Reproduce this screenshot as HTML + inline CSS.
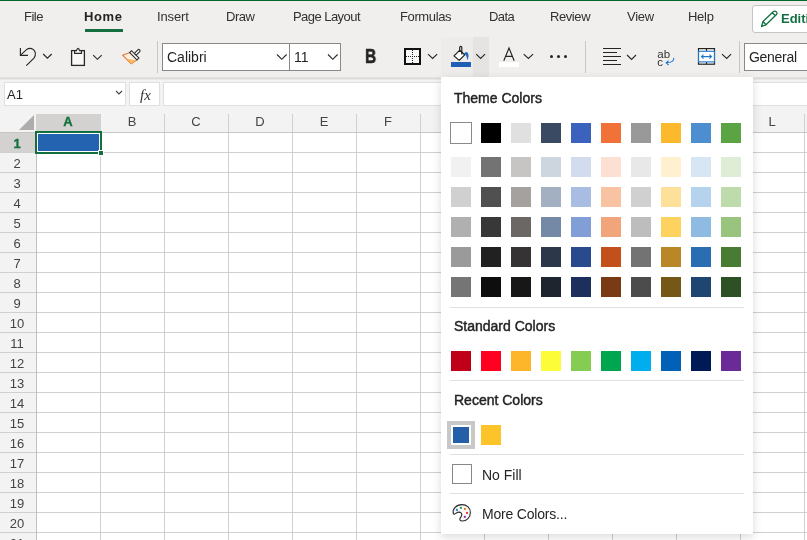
<!DOCTYPE html>
<html><head><meta charset="utf-8">
<style>
*{box-sizing:border-box}
html,body{margin:0;padding:0;width:807px;height:540px;overflow:hidden;background:#fff;font-family:"Liberation Sans",sans-serif;color:#252423}
.a{position:absolute}
.tab,.ptitle,.rh,.ch,.a{will-change:transform}
.tab{position:absolute;top:9px;font-size:13px;color:#323130;white-space:nowrap;line-height:15px}
.sep{position:absolute;width:1px;background:#c8c6c4}
.chev{position:absolute}
.rh{position:absolute;left:0;width:34px;height:20px;text-align:center;font-size:13px;color:#444;line-height:20px}
.ch{position:absolute;top:112px;height:19px;width:64px;text-align:center;font-size:13px;color:#444;line-height:19px}
.sw{position:absolute;width:20px;height:20px}
.ptitle{position:absolute;left:454px;font-size:14px;font-weight:normal;color:#252423;white-space:nowrap;letter-spacing:0px;-webkit-text-stroke:0.45px #252423}
.hr{position:absolute;left:450px;width:294px;height:1px;background:#e1dfdd}
</style></head><body>
<!-- top tab bar + ribbon background -->
<div class="a" style="left:0;top:0;width:807px;height:77px;background:#f0efee"></div>
<div class="a" style="left:0;top:0;width:807px;height:1px;background:#00672b"></div>

<!-- tabs -->
<div class="tab" style="left:24px;letter-spacing:-0.5px">File</div>
<div class="tab" style="left:84px;font-weight:bold;color:#252423;letter-spacing:0.6px">Home</div>
<div class="a" style="left:85px;top:29px;width:38px;height:3px;background:#13703e"></div>
<div class="tab" style="left:157px;letter-spacing:-0.14px">Insert</div>
<div class="tab" style="left:226px;letter-spacing:-0.5px">Draw</div>
<div class="tab" style="left:293px;letter-spacing:-0.55px">Page Layout</div>
<div class="tab" style="left:400px;letter-spacing:-0.38px">Formulas</div>
<div class="tab" style="left:489px;letter-spacing:-0.6px">Data</div>
<div class="tab" style="left:550px;letter-spacing:-0.42px">Review</div>
<div class="tab" style="left:627px;letter-spacing:-0.23px">View</div>
<div class="tab" style="left:688px;letter-spacing:-0.27px">Help</div>

<!-- Editing button -->
<div class="a" style="left:752px;top:5px;width:70px;height:28px;background:#fff;border:1px solid #c4c4c4;border-radius:3px"></div>
<svg class="a" style="left:758px;top:10px" width="22" height="20" viewBox="0 0 22 20">
<path d="M3.5 16.5 L5 11.5 L15.5 1.5 Q17 0.5 18.5 2 Q19.5 3.5 18.5 4.5 L8 14.8 Z M5 11.5 L8 14.8 M14.3 2.7 L17.4 5.8" fill="none" stroke="#137040" stroke-width="1.3" stroke-linejoin="round"/>
</svg>
<div class="a" style="left:781px;top:11px;font-size:13px;font-weight:bold;color:#137040;white-space:nowrap">Editing</div>

<!-- fill button bg -->
<div class="a" style="left:441px;top:37px;width:32px;height:40px;background:#edeceb"></div>
<div class="a" style="left:473px;top:37px;width:16px;height:40px;background:#e5e4e3"></div>
<!-- ribbon icons -->
<svg class="a" style="left:0;top:36px" width="807" height="41" viewBox="0 36 807 41">
 <g fill="none" stroke="#292827" stroke-width="1.15">
  <!-- undo -->
  <path d="M20.4 48 V55.4 H28"/>
  <path d="M20.6 55.2 L26.5 49.6 Q29.8 47 33.5 49.6 Q37 53 34.2 57.8 L26.3 65.7"/>
  <path d="M43.2 54 L47.4 58.2 L51.7 54"/>
  <!-- clipboard -->
  <rect x="71.6" y="50.6" width="12.8" height="14.8" fill="#f8f8f8" stroke-width="1.3"/>
  <path d="M74.6 53.3 V50.6 H76.5 Q77.2 48.3 78.1 48.3 Q79 48.3 79.6 50.6 H81.5 V53.3 Z" fill="#f8f8f8" stroke-width="1.2"/>
  <path d="M93.2 55.1 L97.4 59.3 L101.7 55.1"/>
 </g>
 <!-- format painter -->
 <g transform="translate(135.2 54.4) rotate(45)">
  <path d="M-5 2.4 L5 2.4 L3.9 9.4 L-8.4 9.5 Z" fill="#fdf1e6" stroke="#e8762c" stroke-width="1.1" stroke-linejoin="round"/>
  <path d="M-2.6 8.8 L4.6 3.6 L3.9 9.4 Z" fill="#f8bd5e"/>
  <rect x="-5.2" y="0" width="10.4" height="2.6" fill="#fff" stroke="#2d2c2b" stroke-width="1.1"/>
  <rect x="-1.3" y="-6.3" width="2.6" height="6.3" rx="1.2" fill="#fff" stroke="#2d2c2b" stroke-width="1.1"/>
 </g>
 <g fill="none" stroke="#292827" stroke-width="1.15">
  <path d="M428 54.1 L432.6 58.5 L437.2 54.1"/>
  <path d="M476.2 54.1 L480.6 58.5 L485.1 54.1"/>
  <path d="M523.7 54.1 L528.4 58.5 L533.1 54.1"/>
  <path d="M627 55 L631.6 59.4 L636 55"/>
  <path d="M722 54.1 L726.7 58.5 L731.1 54.1"/>
 </g>
</svg>


<svg class="a" style="left:0;top:36px" width="807" height="41" viewBox="0 36 807 41">
 <!-- borders icon -->
 <rect x="405" y="49" width="15" height="15" fill="#f8f8f8" stroke="#111" stroke-width="2"/>
 <g fill="#222"><rect x="412" y="50" width="1" height="1"/><rect x="412" y="52" width="1" height="1"/><rect x="412" y="54" width="1" height="1"/><rect x="412" y="58" width="1" height="1"/><rect x="412" y="60" width="1" height="1"/><rect x="412" y="62" width="1" height="1"/><rect x="406" y="56" width="1" height="1"/><rect x="408" y="56" width="1" height="1"/><rect x="410" y="56" width="1" height="1"/><rect x="414" y="56" width="1" height="1"/><rect x="416" y="56" width="1" height="1"/><rect x="418" y="56" width="1" height="1"/><rect x="412" y="56" width="1" height="1"/></g>
 <!-- fill icon -->
 <path d="M454 55.9 L459.6 50.3 L464.7 54.8 L459.2 60.4 Z" fill="#fff" stroke="#1e1e1e" stroke-width="1.2" stroke-linejoin="round"/>
 <path d="M459.7 51 V47.6 Q459.7 46.4 460.75 46.4 Q461.8 46.4 461.8 47.6 V54.4" fill="none" stroke="#1e1e1e" stroke-width="1.15"/>
 <path d="M464 53.7 Q465.3 51.4 467 52.2 Q469 53.4 468.4 57 L467.5 60.6 Q466.8 57.2 466.1 55.6 Q465.3 54.2 464 53.7 Z" fill="#1f66bf"/>
 <rect x="451" y="62" width="20" height="5" fill="#1f5fb5"/>
 <!-- font color A -->
 <rect x="499" y="62" width="20" height="5" fill="#ffffff"/>
 <path d="M503.8 60.8 L509 48 L514.2 60.8 M505.6 56.3 H512.4" fill="none" stroke="#252423" stroke-width="1.15"/>
 <!-- dots -->
 <circle cx="551.5" cy="56.6" r="1.5" fill="#252423"/><circle cx="558.5" cy="56.6" r="1.5" fill="#252423"/><circle cx="565.5" cy="56.6" r="1.5" fill="#252423"/>
 <!-- align -->
 <g stroke="#252423" stroke-width="1.1">
  <path d="M603 48.5 H621 M603 52.5 H617 M603 56.5 H621 M603 60.5 H617 M603 64.5 H621"/>
 </g>
 <!-- wrap text -->
 <text x="657.3" y="57.6" font-size="11.5" fill="#333" font-family="Liberation Sans">ab</text>
 <text x="657.3" y="65.6" font-size="11.5" fill="#333" font-family="Liberation Sans">c</text>
 <path d="M673.7 57.8 Q674.5 62.5 666.5 62.8 M668.6 60.6 L666.2 62.8 L668.6 65" fill="none" stroke="#1f77c9" stroke-width="1.1"/>
 <!-- merge -->
 <g fill="#fafafa" stroke="#252423" stroke-width="1.2">
  <rect x="698.5" y="48.6" width="16" height="15.6"/>
  <path d="M706.5 48.6 V51 M706.5 62 V64.2"/>
 </g>
 <rect x="698.6" y="51.3" width="15.8" height="10.6" fill="#fff" stroke="#1f77c9" stroke-width="1.1"/>
 <path d="M701.5 56.6 H711.5 M703.5 54.6 L701.5 56.6 L703.5 58.6 M709.5 54.6 L711.5 56.6 L709.5 58.6" fill="none" stroke="#1f77c9" stroke-width="1.1"/>
</svg>

<!-- separators -->
<div class="sep" style="left:157px;top:41px;height:32px"></div>
<div class="sep" style="left:585px;top:41px;height:32px"></div>
<div class="sep" style="left:739px;top:41px;height:32px"></div>

<!-- font boxes -->
<div class="a" style="left:162px;top:43px;width:128px;height:28px;background:#fff;border:1px solid #8a8886"></div>
<div class="a" style="left:289px;top:43px;width:52px;height:28px;background:#fff;border:1px solid #8a8886"></div>
<div class="a" style="left:167px;top:49px;font-size:14px;color:#252423">Calibri</div>
<div class="a" style="left:294px;top:49px;font-size:14px;color:#252423">11</div>
<svg class="a" style="left:275px;top:51px" width="14" height="12"><path d="M2 3.5 L6.8 8.3 L11.6 3.5" fill="none" stroke="#292827" stroke-width="1.15"/></svg>
<svg class="a" style="left:326px;top:51px" width="14" height="12"><path d="M2 3.5 L6.8 8.3 L11.6 3.5" fill="none" stroke="#292827" stroke-width="1.15"/></svg>

<!-- Bold -->
<div class="a" style="left:365px;top:46px;font-size:19.5px;font-weight:bold;color:#252423;line-height:20px;transform:scaleX(0.8);transform-origin:0 0;-webkit-text-stroke:0.6px #252423">B</div>

<!-- General box -->
<div class="a" style="left:744px;top:43px;width:80px;height:28px;background:#fff;border:1px solid #8a8886"></div>
<div class="a" style="left:749px;top:49px;font-size:14px;color:#252423;letter-spacing:-0.3px">General</div>

<!-- formula bar area -->
<div class="a" style="left:0;top:77px;width:807px;height:36px;background:#f3f3f3"></div>
<div class="a" style="left:0;top:77px;width:807px;height:3px;background:linear-gradient(#e7e6e5,#dadada 50%,#efefef)"></div>
<div class="a" style="left:4px;top:82px;width:122px;height:24px;background:#fff;border:1px solid #e1dfdd"></div>
<div class="a" style="left:7px;top:87px;font-size:13px;color:#252423">A1</div>
<svg class="a" style="left:114px;top:88px" width="10" height="10"><path d="M2 3 L5 6 L8 3" fill="none" stroke="#444" stroke-width="1.1"/></svg>
<div class="a" style="left:129px;top:82px;width:31px;height:24px;background:#fff;border:1px solid #e1dfdd"></div>
<div class="a" style="left:140px;top:87px;font-size:15px;font-style:italic;font-family:'Liberation Serif',serif;color:#333">fx</div>
<div class="a" style="left:163px;top:82px;width:660px;height:24px;background:#fff;border:1px solid #e1dfdd"></div>

<!-- grid -->
<div class="a" style="left:0;top:113px;width:807px;height:427px;background:#fff"></div>
<div class="a" style="left:0;top:113px;width:807px;height:19px;background:#f3f3f3"></div>
<div class="a" style="left:0;top:113px;width:36px;height:427px;background:#f3f3f3"></div>
<div class="a" style="left:36px;top:114px;width:1px;height:426px;background:#d0d0d0"></div>
<div class="a" style="left:100px;top:114px;width:1px;height:426px;background:#d0d0d0"></div>
<div class="a" style="left:164px;top:114px;width:1px;height:426px;background:#d0d0d0"></div>
<div class="a" style="left:228px;top:114px;width:1px;height:426px;background:#d0d0d0"></div>
<div class="a" style="left:292px;top:114px;width:1px;height:426px;background:#d0d0d0"></div>
<div class="a" style="left:356px;top:114px;width:1px;height:426px;background:#d0d0d0"></div>
<div class="a" style="left:420px;top:114px;width:1px;height:426px;background:#d0d0d0"></div>
<div class="a" style="left:484px;top:114px;width:1px;height:426px;background:#d0d0d0"></div>
<div class="a" style="left:548px;top:114px;width:1px;height:426px;background:#d0d0d0"></div>
<div class="a" style="left:612px;top:114px;width:1px;height:426px;background:#d0d0d0"></div>
<div class="a" style="left:676px;top:114px;width:1px;height:426px;background:#d0d0d0"></div>
<div class="a" style="left:740px;top:114px;width:1px;height:426px;background:#d0d0d0"></div>
<div class="a" style="left:804px;top:114px;width:1px;height:426px;background:#d0d0d0"></div>
<div class="a" style="left:36px;top:152px;width:771px;height:1px;background:#d0d0d0"></div>
<div class="a" style="left:36px;top:172px;width:771px;height:1px;background:#d0d0d0"></div>
<div class="a" style="left:36px;top:192px;width:771px;height:1px;background:#d0d0d0"></div>
<div class="a" style="left:36px;top:212px;width:771px;height:1px;background:#d0d0d0"></div>
<div class="a" style="left:36px;top:232px;width:771px;height:1px;background:#d0d0d0"></div>
<div class="a" style="left:36px;top:252px;width:771px;height:1px;background:#d0d0d0"></div>
<div class="a" style="left:36px;top:272px;width:771px;height:1px;background:#d0d0d0"></div>
<div class="a" style="left:36px;top:292px;width:771px;height:1px;background:#d0d0d0"></div>
<div class="a" style="left:36px;top:312px;width:771px;height:1px;background:#d0d0d0"></div>
<div class="a" style="left:36px;top:332px;width:771px;height:1px;background:#d0d0d0"></div>
<div class="a" style="left:36px;top:352px;width:771px;height:1px;background:#d0d0d0"></div>
<div class="a" style="left:36px;top:372px;width:771px;height:1px;background:#d0d0d0"></div>
<div class="a" style="left:36px;top:392px;width:771px;height:1px;background:#d0d0d0"></div>
<div class="a" style="left:36px;top:412px;width:771px;height:1px;background:#d0d0d0"></div>
<div class="a" style="left:36px;top:432px;width:771px;height:1px;background:#d0d0d0"></div>
<div class="a" style="left:36px;top:452px;width:771px;height:1px;background:#d0d0d0"></div>
<div class="a" style="left:36px;top:472px;width:771px;height:1px;background:#d0d0d0"></div>
<div class="a" style="left:36px;top:492px;width:771px;height:1px;background:#d0d0d0"></div>
<div class="a" style="left:36px;top:512px;width:771px;height:1px;background:#d0d0d0"></div>
<div class="a" style="left:36px;top:532px;width:771px;height:1px;background:#d0d0d0"></div>
<div class="a" style="left:0;top:132px;width:807px;height:1px;background:#c8c6c4"></div>
<div class="a" style="left:36px;top:132px;width:1px;height:408px;background:#c0c0c0"></div>
<div class="a" style="left:36px;top:114px;width:64px;height:18px;background:#d4d2d0"></div>
<div class="a" style="left:0;top:133px;width:36px;height:19px;background:#d4d2d0"></div>
<div class="a" style="left:0;top:152px;width:36px;height:1px;background:#d0d0d0"></div>
<div class="a" style="left:0;top:172px;width:36px;height:1px;background:#d0d0d0"></div>
<div class="a" style="left:0;top:192px;width:36px;height:1px;background:#d0d0d0"></div>
<div class="a" style="left:0;top:212px;width:36px;height:1px;background:#d0d0d0"></div>
<div class="a" style="left:0;top:232px;width:36px;height:1px;background:#d0d0d0"></div>
<div class="a" style="left:0;top:252px;width:36px;height:1px;background:#d0d0d0"></div>
<div class="a" style="left:0;top:272px;width:36px;height:1px;background:#d0d0d0"></div>
<div class="a" style="left:0;top:292px;width:36px;height:1px;background:#d0d0d0"></div>
<div class="a" style="left:0;top:312px;width:36px;height:1px;background:#d0d0d0"></div>
<div class="a" style="left:0;top:332px;width:36px;height:1px;background:#d0d0d0"></div>
<div class="a" style="left:0;top:352px;width:36px;height:1px;background:#d0d0d0"></div>
<div class="a" style="left:0;top:372px;width:36px;height:1px;background:#d0d0d0"></div>
<div class="a" style="left:0;top:392px;width:36px;height:1px;background:#d0d0d0"></div>
<div class="a" style="left:0;top:412px;width:36px;height:1px;background:#d0d0d0"></div>
<div class="a" style="left:0;top:432px;width:36px;height:1px;background:#d0d0d0"></div>
<div class="a" style="left:0;top:452px;width:36px;height:1px;background:#d0d0d0"></div>
<div class="a" style="left:0;top:472px;width:36px;height:1px;background:#d0d0d0"></div>
<div class="a" style="left:0;top:492px;width:36px;height:1px;background:#d0d0d0"></div>
<div class="a" style="left:0;top:512px;width:36px;height:1px;background:#d0d0d0"></div>
<div class="a" style="left:0;top:532px;width:36px;height:1px;background:#d0d0d0"></div>
<div class="a" style="left:0;top:552px;width:36px;height:1px;background:#d0d0d0"></div>
<div class="rh" style="top:134px;color:#13703e;font-weight:bold;-webkit-text-stroke:0.35px #13703e">1</div>
<div class="rh" style="top:154px;">2</div>
<div class="rh" style="top:174px;">3</div>
<div class="rh" style="top:194px;">4</div>
<div class="rh" style="top:214px;">5</div>
<div class="rh" style="top:234px;">6</div>
<div class="rh" style="top:254px;">7</div>
<div class="rh" style="top:274px;">8</div>
<div class="rh" style="top:294px;">9</div>
<div class="rh" style="top:314px;">10</div>
<div class="rh" style="top:334px;">11</div>
<div class="rh" style="top:354px;">12</div>
<div class="rh" style="top:374px;">13</div>
<div class="rh" style="top:394px;">14</div>
<div class="rh" style="top:414px;">15</div>
<div class="rh" style="top:434px;">16</div>
<div class="rh" style="top:454px;">17</div>
<div class="rh" style="top:474px;">18</div>
<div class="rh" style="top:494px;">19</div>
<div class="rh" style="top:514px;">20</div>
<div class="rh" style="top:534px;">21</div>
<div class="ch" style="left:36px;color:#13703e;font-weight:bold;-webkit-text-stroke:0.35px #13703e">A</div>
<div class="ch" style="left:100px;">B</div>
<div class="ch" style="left:164px;">C</div>
<div class="ch" style="left:228px;">D</div>
<div class="ch" style="left:292px;">E</div>
<div class="ch" style="left:356px;">F</div>
<div class="ch" style="left:420px;">G</div>
<div class="ch" style="left:484px;">H</div>
<div class="ch" style="left:548px;">I</div>
<div class="ch" style="left:612px;">J</div>
<div class="ch" style="left:676px;">K</div>
<div class="ch" style="left:740px;">L</div>
<svg class="a" style="left:18px;top:114px" width="17" height="17"><path d="M16 1 V16 H1 Z" fill="#adadad"/></svg>
<div class="a" style="left:35px;top:131px;width:67px;height:23px;border:2px solid #13703e;background:#fff"></div>
<div class="a" style="left:38px;top:134px;width:61px;height:17px;background:#2463b0"></div>
<div class="a" style="left:98px;top:150px;width:6px;height:6px;background:#fff"></div>
<div class="a" style="left:99px;top:151px;width:4px;height:4px;background:#13703e"></div>
<div class="a" style="left:441px;top:77px;width:312px;height:457px;background:#fff;box-shadow:0 3px 9px rgba(0,0,0,0.15)"></div>
<div class="ptitle" style="top:90px">Theme Colors</div>
<div class="a" style="left:450px;top:122px;width:22px;height:22px;border:1px solid #8a8a8a;background:#fff"></div>
<div class="sw" style="left:481px;top:123px;background:#000000"></div>
<div class="sw" style="left:511px;top:123px;background:#e0e0e0"></div>
<div class="sw" style="left:541px;top:123px;background:#3a4a62"></div>
<div class="sw" style="left:571px;top:123px;background:#3b63bd"></div>
<div class="sw" style="left:601px;top:123px;background:#f07238"></div>
<div class="sw" style="left:631px;top:123px;background:#999999"></div>
<div class="sw" style="left:661px;top:123px;background:#fdb92c"></div>
<div class="sw" style="left:691px;top:123px;background:#4c8ecf"></div>
<div class="sw" style="left:721px;top:123px;background:#5ba444"></div>
<div class="sw" style="left:451px;top:157px;background:#f1f1f1"></div>
<div class="sw" style="left:481px;top:157px;background:#737373"></div>
<div class="sw" style="left:511px;top:157px;background:#c6c5c3"></div>
<div class="sw" style="left:541px;top:157px;background:#cdd5df"></div>
<div class="sw" style="left:571px;top:157px;background:#d3dcee"></div>
<div class="sw" style="left:601px;top:157px;background:#fde0d4"></div>
<div class="sw" style="left:631px;top:157px;background:#e8e8e8"></div>
<div class="sw" style="left:661px;top:157px;background:#fff1cf"></div>
<div class="sw" style="left:691px;top:157px;background:#d6e6f4"></div>
<div class="sw" style="left:721px;top:157px;background:#dfecd6"></div>
<div class="sw" style="left:451px;top:187px;background:#d0d0d0"></div>
<div class="sw" style="left:481px;top:187px;background:#505050"></div>
<div class="sw" style="left:511px;top:187px;background:#a5a19f"></div>
<div class="sw" style="left:541px;top:187px;background:#a2b0c2"></div>
<div class="sw" style="left:571px;top:187px;background:#a9bde3"></div>
<div class="sw" style="left:601px;top:187px;background:#f7c3a3"></div>
<div class="sw" style="left:631px;top:187px;background:#d0d0d0"></div>
<div class="sw" style="left:661px;top:187px;background:#fde19a"></div>
<div class="sw" style="left:691px;top:187px;background:#b6d3ee"></div>
<div class="sw" style="left:721px;top:187px;background:#bddbab"></div>
<div class="sw" style="left:451px;top:217px;background:#b0b0b0"></div>
<div class="sw" style="left:481px;top:217px;background:#383838"></div>
<div class="sw" style="left:511px;top:217px;background:#6b6764"></div>
<div class="sw" style="left:541px;top:217px;background:#7489a5"></div>
<div class="sw" style="left:571px;top:217px;background:#829ed6"></div>
<div class="sw" style="left:601px;top:217px;background:#f2a57b"></div>
<div class="sw" style="left:631px;top:217px;background:#bdbdbd"></div>
<div class="sw" style="left:661px;top:217px;background:#fdd25f"></div>
<div class="sw" style="left:691px;top:217px;background:#8fbbe3"></div>
<div class="sw" style="left:721px;top:217px;background:#99c47e"></div>
<div class="sw" style="left:451px;top:247px;background:#9a9a9a"></div>
<div class="sw" style="left:481px;top:247px;background:#212121"></div>
<div class="sw" style="left:511px;top:247px;background:#353333"></div>
<div class="sw" style="left:541px;top:247px;background:#2c3749"></div>
<div class="sw" style="left:571px;top:247px;background:#2a4a8e"></div>
<div class="sw" style="left:601px;top:247px;background:#c3501b"></div>
<div class="sw" style="left:631px;top:247px;background:#737373"></div>
<div class="sw" style="left:661px;top:247px;background:#b98726"></div>
<div class="sw" style="left:691px;top:247px;background:#2a6db2"></div>
<div class="sw" style="left:721px;top:247px;background:#477c32"></div>
<div class="sw" style="left:451px;top:277px;background:#757575"></div>
<div class="sw" style="left:481px;top:277px;background:#0e0e0e"></div>
<div class="sw" style="left:511px;top:277px;background:#171717"></div>
<div class="sw" style="left:541px;top:277px;background:#1e252f"></div>
<div class="sw" style="left:571px;top:277px;background:#1c2f5d"></div>
<div class="sw" style="left:601px;top:277px;background:#7a3a16"></div>
<div class="sw" style="left:631px;top:277px;background:#4c4c4c"></div>
<div class="sw" style="left:661px;top:277px;background:#755717"></div>
<div class="sw" style="left:691px;top:277px;background:#1e4670"></div>
<div class="sw" style="left:721px;top:277px;background:#2e5025"></div>
<div class="hr" style="top:307px"></div>
<div class="ptitle" style="top:318px">Standard Colors</div>
<div class="sw" style="left:451px;top:351px;background:#c00018"></div>
<div class="sw" style="left:481px;top:351px;background:#ff0021"></div>
<div class="sw" style="left:511px;top:351px;background:#fdb52a"></div>
<div class="sw" style="left:541px;top:351px;background:#fdfc38"></div>
<div class="sw" style="left:571px;top:351px;background:#84cc52"></div>
<div class="sw" style="left:601px;top:351px;background:#00a64f"></div>
<div class="sw" style="left:631px;top:351px;background:#00aeed"></div>
<div class="sw" style="left:661px;top:351px;background:#0061b6"></div>
<div class="sw" style="left:691px;top:351px;background:#001a55"></div>
<div class="sw" style="left:721px;top:351px;background:#6a2b99"></div>
<div class="hr" style="top:380px"></div>
<div class="ptitle" style="top:392px">Recent Colors</div>
<div class="a" style="left:447px;top:421px;width:28px;height:28px;border:4px solid #c8c8c8;background:#fff"></div>
<div class="a" style="left:453px;top:427px;width:16px;height:16px;background:#2360a8"></div>
<div class="sw" style="left:481px;top:425px;background:#fdc42a"></div>
<div class="hr" style="top:454px"></div>
<div class="a" style="left:452px;top:464px;width:20px;height:20px;border:1px solid #8a8886;background:#fff"></div>
<div class="a" style="left:482px;top:467px;font-size:14px;color:#252423;white-space:nowrap">No Fill</div>
<div class="hr" style="top:493px"></div>
<div class="a" style="left:482px;top:506px;font-size:14px;color:#252423;white-space:nowrap;letter-spacing:-0.2px">More Colors...</div>
<svg class="a" style="left:448px;top:500px" width="28" height="26" viewBox="0 0 28 26">
<path d="M5.5 13.8 C3.8 9.5 8 4.6 13.9 4.6 C19 4.6 22.4 8.2 22.4 12.5 C22.4 17.4 18.5 21 14.4 21 C11.8 21 11.2 19.2 12.4 17.6 C13.6 16 14.8 14.3 13 12.8 C11 11.2 9.2 12.4 7.8 13.4 C6.8 14.1 5.8 14.4 5.5 13.8 Z" fill="#fafafa" stroke="#2b2b2b" stroke-width="1.1"/>
<rect x="7.9" y="8.9" width="2" height="2" fill="#1f7fd6"/><rect x="11.9" y="6.8" width="2" height="2" fill="#1e9e4a"/><rect x="15.9" y="7.9" width="2" height="2" fill="#ee7a22"/><rect x="18" y="11.9" width="2" height="2" fill="#ee3b3b"/><rect x="15.8" y="15.8" width="2" height="2" fill="#8e2fae"/>
</svg>
</body></html>
